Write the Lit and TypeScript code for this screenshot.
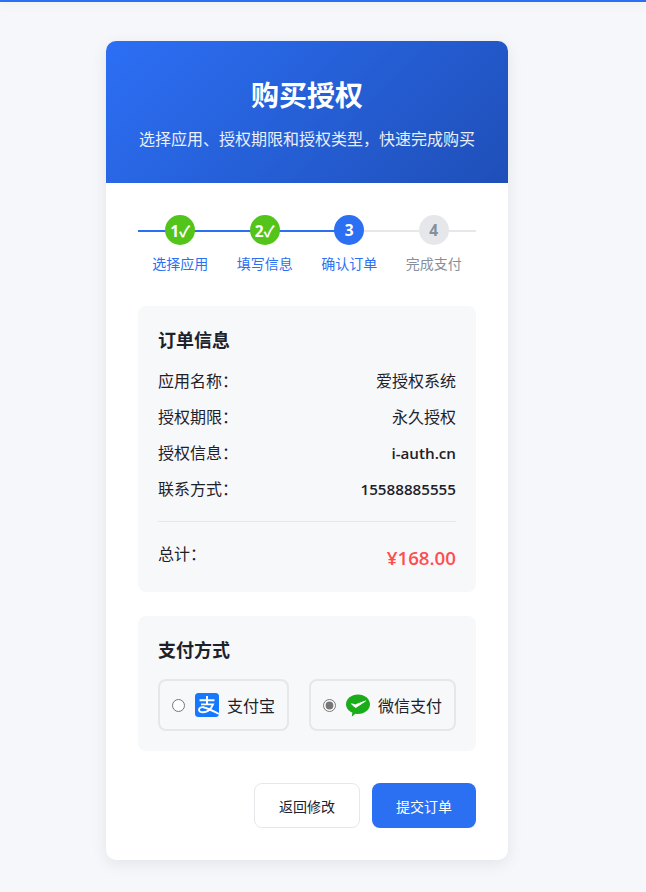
import { LitElement, html, css } from "lit";
import { customElement, state } from "lit/decorators.js";

const steps = [
  { n: "1✓", label: "选择应用", cls: "done" },
  { n: "2✓", label: "填写信息", cls: "done" },
  { n: "3", label: "确认订单", cls: "active" },
  { n: "4", label: "完成支付", cls: "todo" },
];
const rows = [
  { k: "应用名称：", v: "爱授权系统", strong: false },
  { k: "授权期限：", v: "永久授权", strong: false },
  { k: "授权信息：", v: "i-auth.cn", strong: true },
  { k: "联系方式：", v: "15588885555", strong: true },
];

@customElement("app-root")
export class AppRoot extends LitElement {
  @state() pay = "wechat";

  static styles = css`
    :host {
      display: block;
      min-height: 892px;
      box-sizing: border-box;
      background: #f5f7fa;
      font-family: "Open Sans", "Noto Sans CJK SC", sans-serif;
      color: #1d2129;
    }
    * { box-sizing: border-box; }
    .topbar { height: 2px; background: #2b6ff2; box-shadow: 0 2px 10px rgba(0,0,0,.1); }
    .page { padding: 39px 0 32px 106px; }
    .card {
      width: 402px; border-radius: 10px; background: #fff; overflow: hidden;
      box-shadow: 0 4px 16px rgba(0,0,0,.08);
    }
    .head {
      height: 142px; padding-top: 35px; text-align: center; color: #fff;
      background: linear-gradient(135deg, #2c6ff5, #1f4fb8);
    }
    .head h1 { margin: 0; font-size: 28px; line-height: 38px; font-weight: 700; }
    .head p { margin: 13px 0 0; font-size: 16px; line-height: 24px; opacity: .9; }
    .body { padding: 32px; }
    .steps { display: grid; grid-template-columns: repeat(4, 1fr); }
    .step { display: flex; flex-direction: column; align-items: center; }
    .track {
      width: 100%; height: 30px; display: flex; justify-content: center;
      background-repeat: no-repeat; background-size: 100% 2px; background-position: 0 15px;
    }
    .step.done .track { background-image: linear-gradient(#2b6ff2, #2b6ff2); }
    .step.active .track { background-image: linear-gradient(90deg, #2b6ff2 50%, #e5e7eb 50%); }
    .step.todo .track { background-image: linear-gradient(#e5e7eb, #e5e7eb); }
    .dot {
      width: 30px; height: 30px; border-radius: 50%; display: flex; align-items: center; justify-content: center;
      font-size: 15.5px; font-weight: 700; color: #fff; white-space: nowrap;
    }
    .done .dot { background: #52c41a; }
    .active .dot { background: #2b6ff2; }
    .todo .dot { background: #e5e7eb; color: #86909c; }
    .label { margin-top: 8px; font-size: 14px; line-height: 21px; color: #2b6ff2; }
    .todo .label { color: #86909c; }
    .panel { background: #f7f8fa; border-radius: 8px; padding: 20px; }
    .order { margin-top: 32px; height: 286px; }
    .panel h2 { margin: 0; font-size: 18px; line-height: 28px; font-weight: 700; }
    .rows { margin-top: 15px; display: flex; flex-direction: column; gap: 12px; }
    .row { display: flex; justify-content: space-between; font-size: 16px; line-height: 24px; }
    .row .strong { font-size: 15.2px; font-weight: 600; }
    .total {
      margin-top: 20px; padding-top: 20px; border-top: 1px solid #e5e7eb;
      display: flex; justify-content: space-between; font-size: 16px; line-height: 24px;
    }
    .price { color: #ff4d4f; font-size: 18.7px; font-weight: 600; line-height: 32px; }
    .payment { margin-top: 24px; height: 135px; }
    .options { margin-top: 15px; display: flex; gap: 20px; }
    .opt {
      flex: none; height: 52px; padding: 0 12px; display: flex; align-items: center; white-space: nowrap;
      border: 2px solid #e5e7eb; border-radius: 8px; font-size: 16px; cursor: pointer;
    }
    .opt input { margin: 0 10px 0 0; width: 13px; height: 13px; accent-color: #767676; }
    .opt svg { width: 24px; height: 24px; margin-right: 8px; flex: none; }
    .actions { margin-top: 32px; display: flex; justify-content: flex-end; gap: 12px; }
    button {
      height: 45px; border-radius: 8px; font: inherit; font-size: 14px; cursor: pointer;
    }
    .ghost { width: 106px; background: #fff; border: 1px solid #e5e7eb; color: #1d2129; }
    .primary { width: 104px; background: #2b6ff2; border: 0; color: #fff; }
  `;

  render() {
    return html`
      <div class="topbar"></div>
      <div class="page">
        <div class="card">
          <div class="head">
            <h1>购买授权</h1>
            <p>选择应用、授权期限和授权类型，快速完成购买</p>
          </div>
          <div class="body">
            <div class="steps">
              ${steps.map(s => html`
                <div class="step ${s.cls}">
                  <div class="track"><div class="dot">${s.n}</div></div>
                  <div class="label">${s.label}</div>
                </div>`)}
            </div>
            <div class="panel order">
              <h2>订单信息</h2>
              <div class="rows">
                ${rows.map(r => html`
                  <div class="row"><span>${r.k}</span><span class=${r.strong ? "strong" : ""}>${r.v}</span></div>`)}
              </div>
              <div class="total"><span>总计：</span><span class="price">¥168.00</span></div>
            </div>
            <div class="panel payment">
              <h2>支付方式</h2>
              <div class="options">
                <label class="opt">
                  <input type="radio" name="pay" .checked=${this.pay === "alipay"} @change=${() => (this.pay = "alipay")} />
                  <svg viewBox="0 0 24 24">
                    <rect width="24" height="24" rx="3.5" fill="#1677ff"/>
                    <path d="M4.500 7.200h15M12 3v8.400M6 11.400h12c-1.600 4.200-5 7.600-9.600 7.900-2.800.2-4.400-1-4.400-2.500 0-1.800 1.800-2.900 4.200-2.600 4 .5 9 3.400 15.800 6.800" fill="none" stroke="#fff" stroke-width="1.900"/>
                  </svg>
                  支付宝
                </label>
                <label class="opt">
                  <input type="radio" name="pay" .checked=${this.pay === "wechat"} @change=${() => (this.pay = "wechat")} />
                  <svg viewBox="0 0 24 24">
                    <g transform="translate(0 1)">
                      <path d="M12 .5c6.600 0 12 4.300 12 9.700s-5.400 9.700-12 9.700c-.9 0-1.800-.1-2.700-.2L5.800 22.800l.5-4.300C2.500 16.900 0 13.800 0 10.200 0 4.800 5.400 .5 12 .5z" fill="#1aad19"/>
                      <path d="M5.500 9.800l3.300 3.300c.4.400.8.400 1.200.2l9.500-6.300-9.800 3.700c-.4.200-.8.200-1.100 0z" fill="#fff" stroke="#fff" stroke-width="1" stroke-linejoin="round"/>
                    </g>
                  </svg>
                  微信支付
                </label>
              </div>
            </div>
            <div class="actions">
              <button class="ghost">返回修改</button>
              <button class="primary">提交订单</button>
            </div>
          </div>
        </div>
      </div>
    `;
  }
}
